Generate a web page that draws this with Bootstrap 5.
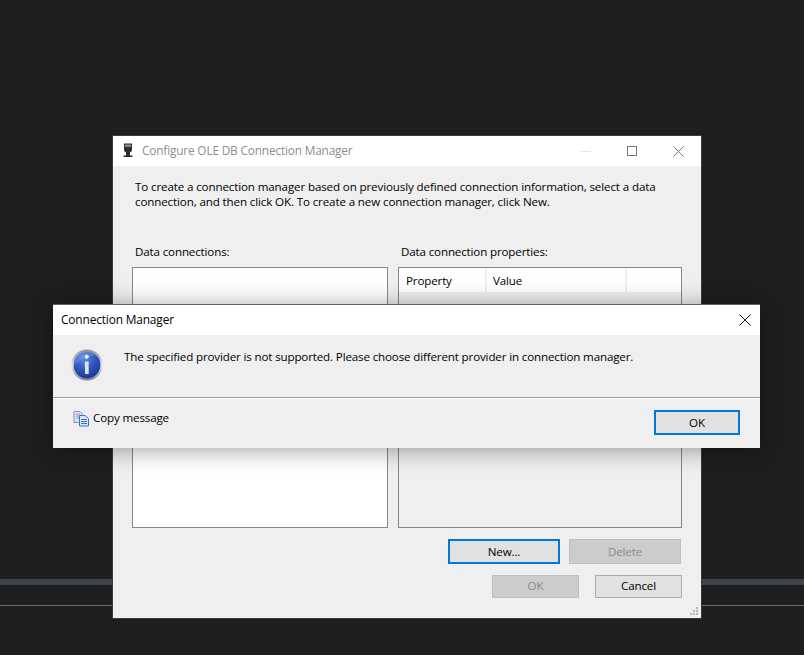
<!DOCTYPE html>
<html lang="en">
<head>
<meta charset="utf-8">
<title>Connection Manager</title>
<link href="https://cdn.jsdelivr.net/npm/bootstrap@5.3.0/dist/css/bootstrap.min.css" rel="stylesheet">
<style>
html,body{margin:0;height:100%;}
body{background:#1e1e1e;overflow:hidden;font-family:"Open Sans","Noto Sans",sans-serif;font-size:11.6px;letter-spacing:-.15px;line-height:15px;color:#000;}
.desk{position:relative;width:804px;height:655px;overflow:hidden;}
.bgband{position:absolute;left:0;right:0;top:579px;height:6px;background:#3f4449;}
.bgline{position:absolute;left:0;right:0;top:605px;height:1px;background:#6a6a6a;}
.win{position:absolute;background:#efefef;}
.win-back{left:113px;top:136px;width:588px;height:482px;box-shadow:0 0 0 1px #3a3a3a;}
.win-msg{left:53px;top:304px;width:707px;height:144px;border-top:1px solid #5f5f5f;box-shadow:0 2px 22px rgba(0,0,0,.38);}
.tbar{background:#fff;height:30px;}
.win-msg .tbar{padding-bottom:1px;}
.ttl-off{color:#8e8e8e;margin-left:8px;font-size:11.8px;padding-bottom:2px;}
.ic-plug{margin-left:9px;}
.ctl{width:46px;height:30px;}
.ctl-x{width:30px;height:27px;}
.intro{padding:13px 22px 0;height:78px;letter-spacing:-.13px;}
.lbl{height:23px;padding-left:3px;}
.cols{padding:0 19px;}
.col-l{width:256px;}
.col-r{width:284px;}
.lbox{height:261px;border:1px solid #828790;background:#fff;}
.rbox{height:261px;border:1px solid #828790;background:#efefef;}
.rhead{height:24px;background:#fff;}
.rhead>div{border-right:2px solid #efefef;padding:5px 0 0 7px;}
.rc1{width:88px;}
.rc2{width:140px;padding-left:6px!important;}
.rc3{flex:1;border-right:0!important;}
.dlg-btn{--bs-btn-padding-y:0;--bs-btn-padding-x:0;--bs-btn-font-size:11.6px;--bs-btn-line-height:1;--bs-btn-border-radius:0;border-radius:0;background:#e1e1e1;border:1px solid #adadad;color:#000;height:25px;font-family:inherit;letter-spacing:inherit;}
.dlg-btn.on{border:2px solid #0078d7;}
.dlg-btn[disabled]{background:#ccc;border:1px solid #bfbfbf;color:#8a8a8a;opacity:1;}
.bw1{width:112px;}
.bw2{width:87px;height:23px;padding-bottom:2px;}
.brow1{padding:11px 20px 0 0;gap:9px;}
.brow2{padding:11px 19px 0 0;gap:16px;}
.grip{position:absolute;right:2px;bottom:2px;}
.msgbody{height:62px;padding:14px 0 0 18px;}
.msgtxt{padding:0 0 0 21px;}
.sep{background:#a0a0a0;border-bottom:1px solid #fff;box-sizing:content-box;height:1px;}
.foot{padding:11px 20px 0 20px;}
.copy-ic{margin:1px 3px 0 0;}
.bok{width:86px;}
.ttl-msg{margin-left:8px;font-size:11.9px;}
</style>
</head>
<body>
<div class="desk">
  <div class="bgband"></div>
  <div class="bgline"></div>

  <div class="win win-back">
    <div class="tbar d-flex align-items-center">
      <svg class="ic-plug" width="12" height="16" viewBox="0 0 12 16"><path d="M2 0.5h8v6.5c0 1.2-1 2-2 2.2v3.3h2.5v1.5h-9v-1.5H4V9.2C3 9 2 8.2 2 7z" fill="#2c2c2c"/><rect x="3" y="1.5" width="6" height="2.4" fill="#8d8d8d"/></svg>
      <span class="ttl-off">Configure OLE DB Connection Manager</span>
      <div class="ms-auto d-flex">
        <div class="ctl d-flex align-items-center justify-content-center"><svg width="10" height="10"><rect x="0" y="5" width="10" height="1" fill="#e2e2e2"/></svg></div>
        <div class="ctl d-flex align-items-center justify-content-center"><svg width="10" height="10"><rect x=".5" y=".5" width="9" height="9" fill="none" stroke="#777"/></svg></div>
        <div class="ctl d-flex align-items-center justify-content-center"><svg width="11" height="11"><path d="M.5.5l10 10M10.5.5l-10 10" stroke="#777" fill="none"/></svg></div>
      </div>
    </div>
    <div class="intro">To create a connection manager based on previously defined connection information, select a data connection, and then click OK. To create a new connection manager, click New.</div>
    <div class="cols d-flex gap-2 justify-content-between">
      <div class="col-l">
        <div class="lbl">Data connections:</div>
        <div class="lbox"></div>
      </div>
      <div class="col-r">
        <div class="lbl">Data connection properties:</div>
        <div class="rbox">
          <div class="rhead d-flex">
            <div class="rc1">Property</div>
            <div class="rc2">Value</div>
            <div class="rc3"></div>
          </div>
        </div>
      </div>
    </div>
    <div class="brow1 d-flex justify-content-end">
      <button class="btn dlg-btn on bw1" type="button">New...</button>
      <button class="btn dlg-btn bw1" type="button" disabled>Delete</button>
    </div>
    <div class="brow2 d-flex justify-content-end">
      <button class="btn dlg-btn bw2" type="button" disabled>OK</button>
      <button class="btn dlg-btn bw2" type="button">Cancel</button>
    </div>
    <svg class="grip" width="9" height="9" viewBox="0 0 9 9" fill="#b5b5b5"><rect x="6" y="0" width="2" height="2"/><rect x="3" y="3" width="2" height="2"/><rect x="6" y="3" width="2" height="2"/><rect x="0" y="6" width="2" height="2"/><rect x="3" y="6" width="2" height="2"/><rect x="6" y="6" width="2" height="2"/></svg>
  </div>

  <div class="win win-msg">
    <div class="tbar d-flex align-items-center">
      <span class="ttl-msg">Connection Manager</span>
      <div class="ms-auto ctl-x d-flex align-items-center justify-content-center"><svg width="12" height="12"><path d="M.5.5l11 11M11.5.5l-11 11" stroke="#111" fill="none"/></svg></div>
    </div>
    <div class="msgbody d-flex">
      <svg width="32" height="32" viewBox="0 0 32 32">
        <defs>
          <radialGradient id="ig" cx=".4" cy=".25" r=".85"><stop offset="0" stop-color="#5a86e6"/><stop offset=".55" stop-color="#2b50b8"/><stop offset="1" stop-color="#15308c"/></radialGradient>
          <linearGradient id="rg" x1="0" y1="0" x2="0" y2="1"><stop offset="0" stop-color="#7d828c"/><stop offset=".5" stop-color="#e8e8e8"/><stop offset="1" stop-color="#7d828c"/></linearGradient>
        </defs>
        <circle cx="16" cy="16" r="15.6" fill="url(#rg)"/>
        <circle cx="16" cy="16" r="13.4" fill="url(#ig)"/>
        <path d="M3.5 17C8 10 16 7 27 6.5A13 13 0 0 0 3.5 17z" fill="#fff" opacity=".14"/>
        <circle cx="15.8" cy="7.8" r="2" fill="#eef2fb"/>
        <path d="M13.8 12.5h3.9v12.5h-3.6z" fill="#dde2ec"/>
      </svg>
      <div class="msgtxt">The specified provider is not supported. Please choose different provider in connection manager.</div>
    </div>
    <div class="sep"></div>
    <div class="foot d-flex justify-content-between">
      <div class="d-flex align-items-start">
        <svg class="copy-ic" width="17" height="16" viewBox="0 0 17 16"><path d="M1 .5h6l2 2v9H1z" fill="#dfe1ea" stroke="#8f95a8"/><path d="M3 3h4M3 5h4M3 7h4" stroke="#9aa0b4"/><path d="M6.500 4.500h5.500l3.500 3v7.500h-9z" fill="#dbe8fb" stroke="#3f6fc9"/><path d="M8 8.500h6M8 10.500h6M8 12.500h6" stroke="#3f6fc9"/></svg>
        <span>Copy message</span>
      </div>
      <button class="btn dlg-btn on bok" type="button">OK</button>
    </div>
  </div>
</div>
<script src="https://cdn.jsdelivr.net/npm/bootstrap@5.3.0/dist/js/bootstrap.bundle.min.js"></script>
</body>
</html>
